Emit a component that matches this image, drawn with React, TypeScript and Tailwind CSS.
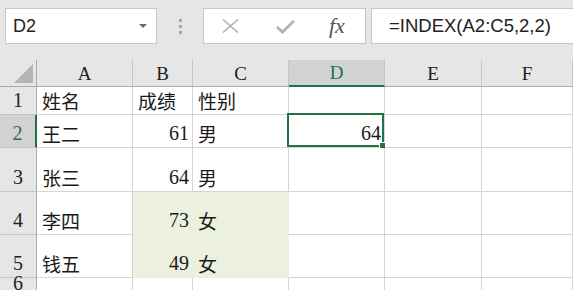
import React from 'react';

const cols = ['A', 'B', 'C', 'D', 'E', 'F'];

const rows: string[][] = [
  ['姓名', '成绩', '性别', '', '', ''],
  ['王二', '61', '男', '64', '', ''],
  ['张三', '64', '男', '', '', ''],
  ['李四', '73', '女', '', '', ''],
  ['钱五', '49', '女', '', '', ''],
  ['', '', '', '', '', ''],
];

const rowHeights = ['h-[28px]', 'h-[33px]', 'h-[44px]', 'h-[43px]', 'h-[43px]', 'h-[20px]'];

const isNum = (v: string) => /^\d+$/.test(v);
const isFilled = (r: number, c: number) => (r === 3 || r === 4) && (c === 1 || c === 2);

const Cell: React.FC<{ value: string; r: number; c: number }> = ({ value, r, c }) => {
  const filled = isFilled(r, c);
  const active = r === 1 && c === 3;
  return (
    <div
      className={`relative flex items-end border-r border-b ${rowHeights[r]} ${
        filled ? 'bg-[#ebf1de] border-[#ebf1de]' : 'bg-white border-[#d4d4d4]'
      } ${isNum(value) ? 'justify-end pr-[3px] font-["Liberation_Serif",serif] text-[20px]' : 'pl-[5px] font-["Noto_Sans_CJK_SC",sans-serif] text-[19px]'} text-[#1a1a1a] leading-none pb-[4px]`}
    >
      <span>{value}</span>
      {active && (
        <div className="absolute -left-[2px] -top-[2px] -right-[0px] -bottom-[0px] border-2 border-[#217346] pointer-events-none">
          <div className="absolute -right-[4px] -bottom-[4px] w-[7px] h-[7px] bg-[#217346] border border-white" />
        </div>
      )}
    </div>
  );
};

export default function App() {
  return (
    <div className="w-[573px] h-[290px] overflow-hidden bg-white select-none">
      {/* Formula bar */}
      <div className="h-[60px] bg-[#e6e6e6] flex items-start pt-[8px] pl-[5px]">
        <div className="w-[152px] h-[36px] bg-white border border-[#c6c6c6] flex items-center justify-between pl-[7px] pr-[9px]">
          <span className="font-['Liberation_Sans',sans-serif] text-[18px] text-[#222]">D2</span>
          <svg width="8" height="5" viewBox="0 0 8 5">
            <polygon points="0,0 8,0 4,4" fill="#6a6a6a" />
          </svg>
        </div>
        <div className="w-[46px] h-[36px] flex flex-col items-center justify-center gap-[3px]">
          <div className="w-[3px] h-[3px] bg-[#a6a6a6]" />
          <div className="w-[3px] h-[3px] bg-[#a6a6a6]" />
          <div className="w-[3px] h-[3px] bg-[#a6a6a6]" />
        </div>
        <div className="w-[163px] h-[36px] bg-white border border-[#c6c6c6] flex items-center">
          <svg className="ml-[18px]" width="17" height="14" viewBox="0 0 17 14">
            <path d="M1 0.5 L16 13.5 M16 0.5 L1 13.5" stroke="#b0b0b0" strokeWidth="1.6" />
          </svg>
          <svg className="ml-[37px]" width="19" height="15" viewBox="0 0 19 15">
            <path d="M1 8 L6.5 13 L18 2" stroke="#b4b4b4" strokeWidth="3" fill="none" />
          </svg>
          <span className="ml-[34px] font-['Liberation_Serif',serif] italic text-[22px] text-[#555] leading-none">
            fx
          </span>
        </div>
        <div className="ml-[5px] flex-1 -mr-[2px] h-[36px] bg-white border border-[#c6c6c6] flex items-center pl-[17px]">
          <span className="font-['Liberation_Sans',sans-serif] text-[18.5px] text-[#222]">=INDEX(A2:C5,2,2)</span>
        </div>
      </div>

      {/* Sheet */}
      <div className="grid grid-cols-[37px_96px_60px_96px_96px_97px_1fr]">
        <div className="h-[27px] bg-[#e6e6e6] border-r border-b border-[#ababab] relative">
          <svg className="absolute left-0 top-0" width="36" height="26" viewBox="0 0 36 26">
            <polygon points="14,23 33,23 33,4" fill="#b4b4b4" />
          </svg>
        </div>
        {cols.map((c, i) => (
          <div
            key={c}
            className={`h-[27px] flex items-center justify-center pt-[2px] font-['Liberation_Serif',serif] text-[19px] border-r border-[#c6c6c6] ${
              i === 3
                ? 'bg-[#d2d2d2] text-[#217346] border-b-2 border-b-[#217346]'
                : 'bg-[#e6e6e6] text-[#222] border-b border-b-[#ababab]'
            }`}
          >
            {c}
          </div>
        ))}
        {rows.map((row, r) => (
          <React.Fragment key={r}>
            <div
              className={`${rowHeights[r]} flex items-end justify-center pb-[4px] leading-none font-['Liberation_Serif',serif] text-[20px] border-b border-[#c6c6c6] ${
                r === 1
                  ? 'bg-[#d2d2d2] text-[#217346] border-r-2 border-r-[#217346]'
                  : 'bg-[#e6e6e6] text-[#222] border-r border-r-[#ababab]'
              }`}
            >
              {r + 1}
            </div>
            {row.map((v, c) => (
              <Cell key={c} value={v} r={r} c={c} />
            ))}
          </React.Fragment>
        ))}
      </div>
    </div>
  );
}
